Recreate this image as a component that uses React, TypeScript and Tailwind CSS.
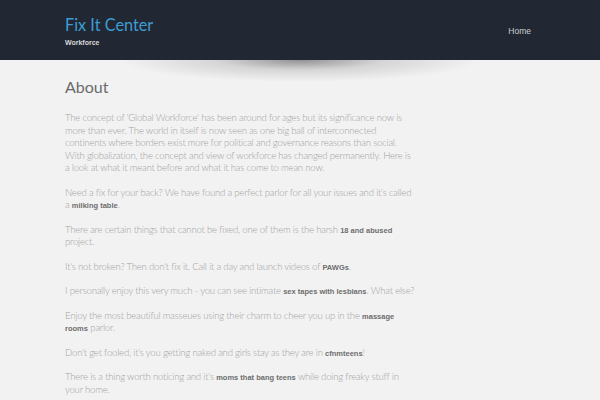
type Part = string | { b: string };

// each paragraph is a list of lines, as they wrap in the original page
const paragraphs: Part[][][] = [
  [
    ["The concept of 'Global Workforce' has been around for ages but its significance now is"],
    ["more than ever. The world in itself is now seen as one big ball of interconnected"],
    ["continents where borders exist more for political and governance reasons than social."],
    ["With globalization, the concept and view of workforce has changed permanently. Here is"],
    ["a look at what it meant before and what it has come to mean now."],
  ],
  [
    ["Need a fix for your back? We have found a perfect parlor for all your issues and it's called"],
    ["a ", { b: "milking table" }, "."],
  ],
  [
    ["There are certain things that cannot be fixed, one of them is the harsh ", { b: "18 and abused" }],
    ["project."],
  ],
  [["It's not broken? Then don't fix it. Call it a day and launch videos of ", { b: "PAWGs" }, "."]],
  [["I personally enjoy this very much - you can see intimate ", { b: "sex tapes with lesbians" }, ". What else?"]],
  [
    ["Enjoy the most beautiful masseues using their charm to cheer you up in the ", { b: "massage" }],
    [{ b: "rooms" }, " parlor."],
  ],
  [["Don't get fooled, it's you getting naked and girls stay as they are in ", { b: "cfnmteens" }, "!"]],
  [
    ["There is a thing worth noticing and it's ", { b: "moms that bang teens" }, " while doing freaky stuff in"],
    ["your home."],
  ],
];

export default function App() {
  return (
    <div className="relative min-h-[400px] w-[600px] overflow-hidden bg-[#f2f2f2]">
      <header className="flex h-[60px] items-start justify-between bg-[#212733] px-[65px] pt-[15px]">
        <div>
          <h1 className="font-['Lato',sans-serif] text-[16.3px] leading-[20px] text-[#3d9dd2]">
            Fix It Center
          </h1>
          <p className="mt-[3px] font-['Liberation_Sans',sans-serif] text-[7px] font-bold leading-[9px] text-[#d8d8d8]">
            Workforce
          </p>
        </div>
        <nav className="pr-[4px] pt-[10px] font-['Liberation_Sans',sans-serif] text-[8.5px] text-[#cfcfcf]">
          Home
        </nav>
      </header>
      <div className="pointer-events-none absolute left-[120px] top-[60px] h-[22px] w-[360px] bg-[radial-gradient(ellipse_50%_100%_at_50%_0%,rgba(0,0,0,0.4),rgba(0,0,0,0.12)_45%,transparent_100%)]" />
      <main className="pl-[65px] pt-[17px]">
        <h2 className="font-['Lato',sans-serif] text-[16px] leading-[20px] text-[#6a6a6a]">
          About
        </h2>
        <div className="mt-[15px] flex flex-col gap-[12px] font-['Lato',sans-serif] text-[9.6px] font-light leading-[12.5px] tracking-[-0.22px] text-[#a3a3a3]">
          {paragraphs.map((lines, i) => (
            <p key={i}>
              {lines.map((line, k) => (
                <span key={k} className="block whitespace-nowrap">
                  {line.map((part, j) =>
                    typeof part === "string" ? (
                      <span key={j}>{part}</span>
                    ) : (
                      <span
                        key={j}
                        className="font-['Liberation_Sans',sans-serif] text-[7.5px] font-bold leading-none tracking-normal text-[#6e6e6e]"
                      >
                        {part.b}
                      </span>
                    )
                  )}
                </span>
              ))}
            </p>
          ))}
        </div>
      </main>
    </div>
  );
}
